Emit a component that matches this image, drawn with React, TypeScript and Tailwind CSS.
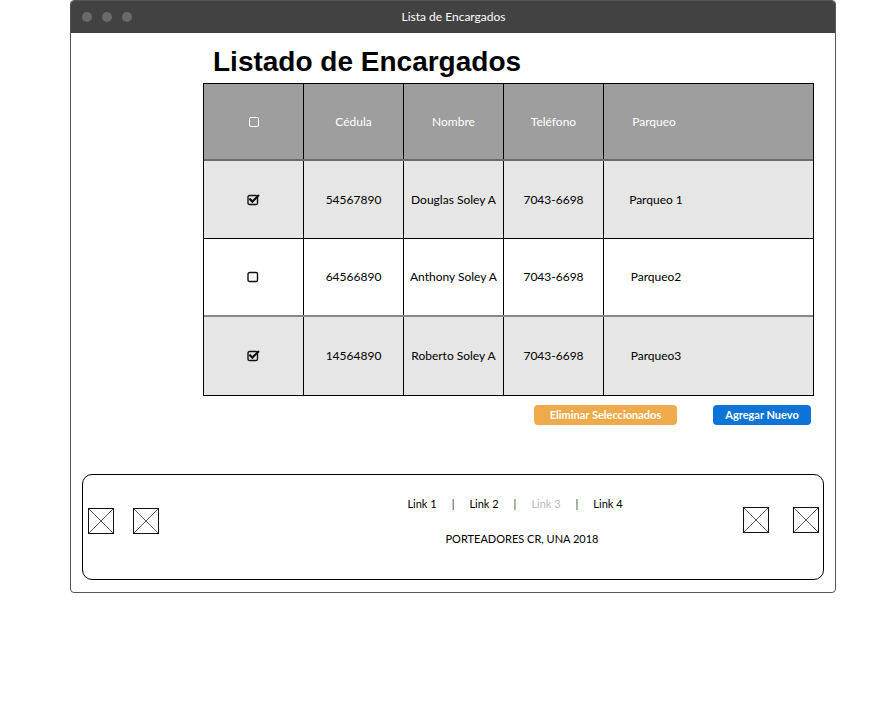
import React from 'react'

const CheckIcon = ({ checked }: { checked: boolean }) => (
  <svg width="13" height="12" viewBox="0 0 13 12" className="block">
    <rect x="1" y="1.5" width="9.5" height="9" rx="1.6" fill="none" stroke="#111" strokeWidth="1.4" />
    {checked && (
      <path d="M3.2 5.4 L5.4 7.6 L11.2 1.8" fill="none" stroke="#111" strokeWidth="2.2" strokeLinecap="square" />
    )}
  </svg>
)

const Placeholder = () => (
  <svg width="26" height="26" viewBox="0 0 26 26" className="block">
    <rect x="0.5" y="0.5" width="25" height="25" fill="white" stroke="#111" strokeWidth="1" />
    <path d="M0.5 0.5 L25.5 25.5 M25.5 0.5 L0.5 25.5" stroke="#111" strokeWidth="0.7" />
  </svg>
)

const App = () => {
  let rows = [
    { checked: true, cedula: "54567890", nombre: "Douglas Soley A", telefono: "7043-6698", parqueo: "Parqueo 1", bg: "bg-[#e6e6e6]" },
    { checked: false, cedula: "64566890", nombre: "Anthony Soley A", telefono: "7043-6698", parqueo: "Parqueo2", bg: "bg-white" },
    { checked: true, cedula: "14564890", nombre: "Roberto Soley A", telefono: "7043-6698", parqueo: "Parqueo3", bg: "bg-[#e6e6e6]" },
  ]
  const sans = "font-['Source_Sans_Pro','Lato','Liberation_Sans',sans-serif]"

  return (
    <div className="w-[886px] h-[703px] bg-white pl-[70px] pt-0">
      <div className={`w-[766px] h-[593px] border border-[#555] rounded-[4px] overflow-hidden flex flex-col ${sans}`}>
        {/* title bar */}
        <div className="h-[33px] bg-[#424242] flex items-center relative shrink-0 -mt-px -mx-px">
          <div className="flex gap-[10px] pl-[12px]">
            <span className="w-[10px] h-[10px] rounded-full bg-[#6a6a6a]" />
            <span className="w-[10px] h-[10px] rounded-full bg-[#6a6a6a]" />
            <span className="w-[10px] h-[10px] rounded-full bg-[#6a6a6a]" />
          </div>
          <div className="absolute inset-0 flex items-center justify-center text-white text-[12px] pl-[1px]">
            Lista de Encargados
          </div>
        </div>

        <div className="flex-1 flex flex-col">
          <h1 className="font-['Liberation_Sans',Arial,sans-serif] font-bold text-[28px] leading-[32px] text-black pl-[142px] pt-[13px]">
            Listado de Encargados
          </h1>

          {/* table */}
          <div className="ml-[132px] mt-[5px] w-[611px] border border-black text-[12px]">
            <div className="grid grid-cols-[100px_100px_100px_100px_1fr] h-[77px] bg-[#9e9e9e] text-white border-b-2 border-[#6b6b6b]">
              <div className="flex items-center justify-center border-r border-black">
                <span className="w-[10px] h-[10px] rounded-[2px] border-[1.5px] border-white" />
              </div>
              <div className="flex items-center justify-center border-r border-black">Cédula</div>
              <div className="flex items-center justify-center border-r border-black">Nombre</div>
              <div className="flex items-center justify-center border-r border-black">Teléfono</div>
              <div className="flex items-center"><span className="w-[100px] text-center">Parqueo</span></div>
            </div>
            {rows.map((r, i) => (
              <div
                key={i}
                className={`grid grid-cols-[100px_100px_100px_100px_1fr] h-[78px] ${r.bg} text-black ${i < rows.length - 1 ? (i === 0 ? 'border-b border-black' : 'border-b-2 border-[#888]') : ''}`}
              >
                <div className="flex items-center justify-center border-r border-black"><CheckIcon checked={r.checked} /></div>
                <div className="flex items-center justify-center border-r border-black">{r.cedula}</div>
                <div className="flex items-center justify-center border-r border-black whitespace-nowrap">{r.nombre}</div>
                <div className="flex items-center justify-center border-r border-black">{r.telefono}</div>
                <div className="flex items-center"><span className="w-[104px] text-center">{r.parqueo}</span></div>
              </div>
            ))}
          </div>

          {/* buttons */}
          <div className="flex justify-end gap-[36px] mt-[9px] pr-[24px] text-[11px] font-bold text-white">
            <button className="w-[143px] h-[20px] rounded-[4px] bg-[#efaa4b]">Eliminar Seleccionados</button>
            <button className="w-[98px] h-[20px] rounded-[4px] bg-[#0b74d6]">Agregar Nuevo</button>
          </div>

          {/* footer */}
          <div className="mx-[11px] mt-[49px] h-[106px] border border-black rounded-[10px] flex items-center pl-[5px] pr-[4px]">
            <div className="flex gap-[19px] mb-[12px]">
              <Placeholder />
              <Placeholder />
            </div>
            <div className="flex-1 flex flex-col items-center pl-[142px] mb-[7px] text-[11px] text-black">
              <div className="flex items-center gap-[15px] -mt-[4px] mr-[14px]">
                <span>Link 1</span>
                <span className="text-[#333]">|</span>
                <span>Link 2</span>
                <span className="text-[#333]">|</span>
                <span className="text-[#bbb]">Link 3</span>
                <span className="text-[#333]">|</span>
                <span>Link 4</span>
              </div>
              <div className="mt-[18px]">PORTEADORES CR, UNA 2018</div>
            </div>
            <div className="flex gap-[24px] mb-[14px]">
              <Placeholder />
              <Placeholder />
            </div>
          </div>
        </div>
      </div>
    </div>
  )
}

export default App
